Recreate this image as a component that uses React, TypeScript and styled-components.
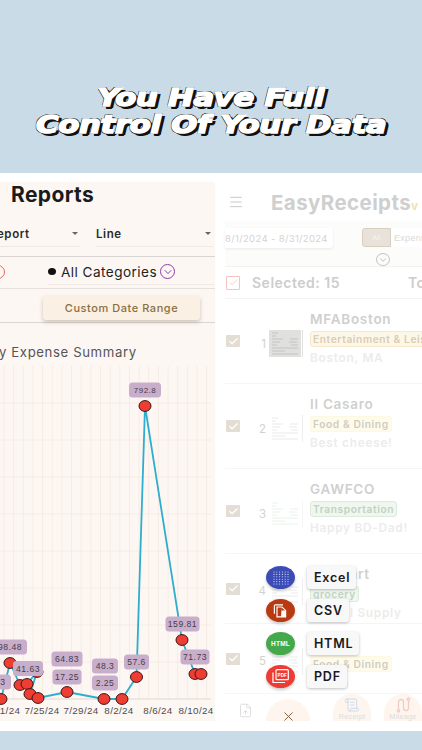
import { createGlobalStyle } from "styled-components";
import styled from "styled-components";
import { Check, ChevronDown, FileUp, Menu, ScrollText, Trash2, X } from "lucide-react";

const rows = [
  { n: 1, title: "MFABoston", tag: "Entertainment & Leisure", tone: "orange", note: "Boston, MA", h: 85, scan: "gray" },
  { n: 2, title: "Il Casaro", tag: "Food & Dining", tone: "yellow", note: "Best cheese!", h: 85, scan: "paper" },
  { n: 3, title: "GAWFCO", tag: "Transportation", tone: "green", note: "Happy BD-Dad!", h: 85, scan: "mint" },
  { n: 4, title: "Walmart", tag: "grocery", tone: "green", note: "School Supply", h: 70, scan: "paper" },
  { n: 5, title: "Apple", tag: "Food & Dining", tone: "yellow", note: "Lunch", h: 70, scan: "paper" },
];

const tones: Record<string, { bg: string; line: string; text: string }> = {
  orange: { bg: "#fdf7e8", line: "#f6e9cb", text: "#d9cdb4" },
  yellow: { bg: "#fefbea", line: "#fdf8e2", text: "#cfcdc4" },
  green: { bg: "#eff7ef", line: "#dcecdc", text: "#c3d2c3" },
};

const scans: Record<string, { bg: string; ink: string; edge: string }> = {
  gray: { bg: "#e0e0de", ink: "#c4c4c2", edge: "#e0e0de" },
  paper: { bg: "#ffffff", ink: "#eaeaea", edge: "#eeeeee" },
  mint: { bg: "#ffffff", ink: "#e6f2ea", edge: "#f6f6f6" },
};

const scanLines = [
  [3, 3, 9], [3, 6, 7], [3, 9, 14], [21, 9, 29], [3, 12, 11], [20, 12, 28],
  [3, 15, 8], [22, 15, 29], [3, 18, 29], [3, 21, 16], [3, 24, 29],
];

const points = [
  [1, 700], [10, 664], [20, 686], [27, 685], [37, 673], [30, 695], [38, 699],
  [67, 693], [104, 700], [122, 700], [136.5, 678], [145, 407], [182, 641],
  [195, 675], [201, 675],
];

const labels = [
  { x: 10, y: 648, w: 34, t: "98.48" },
  { x: 1, y: 683, w: 20, t: "3", tx: 3 },
  { x: 28, y: 669.5, w: 30, t: "41.63" },
  { x: 67, y: 660, w: 31, t: "64.83" },
  { x: 67, y: 678, w: 29, t: "17.25" },
  { x: 105, y: 667, w: 26, t: "48.3" },
  { x: 105, y: 684, w: 26, t: "2.25" },
  { x: 136.5, y: 663, w: 25, t: "57.6" },
  { x: 145, y: 391, w: 32, t: "792.8", small: true },
  { x: 182.5, y: 625, w: 34, t: "159.81" },
  { x: 195, y: 658, w: 29, t: "71.73" },
];

const ticks = [
  { x: 10, t: "1/24" },
  { x: 42, t: "7/25/24" },
  { x: 81, t: "7/29/24" },
  { x: 119, t: "8/2/24" },
  { x: 158, t: "8/6/24" },
  { x: 196, t: "8/10/24" },
];

const CHART_TOP = 367;

function ExpenseChart() {
  const vertical = Array.from({ length: 22 }, (_, i) => 4 + i * 9.65);
  const horizontal = Array.from({ length: 9 }, (_, i) => 404 + i * 37);
  return (
    <ChartSvg viewBox={`0 ${CHART_TOP} 215 355`}>
      {vertical.map((x) => (
        <line key={x} x1={x} x2={x} y1={CHART_TOP} y2={700} stroke="#f7ebe3" strokeWidth="1" />
      ))}
      {horizontal.map((y) => (
        <line key={y} x1={0} x2={211} y1={y} y2={y} stroke="#f7ebe3" strokeWidth="1" />
      ))}
      <line x1={0} x2={211} y1={700} y2={700} stroke="#e4dcd6" strokeWidth="1" />
      <polyline
        points={points.map((p) => p.join(",")).join(" ")}
        fill="none"
        stroke="#2fadcf"
        strokeWidth="1.8"
      />
      {points.map(([x, y]) => (
        <ellipse key={`${x}-${y}`} cx={x} cy={y} rx="6" ry="5.4" fill="#ee3d33" stroke="#421515" strokeWidth="1" />
      ))}
      {labels.map((l) => (
        <g key={l.t}>
          <rect x={l.x - l.w / 2} y={l.y - 7.5} width={l.w} height="15" rx="3.5" fill="#c9aecb" />
          <text
            x={l.tx ?? l.x}
            y={l.y + 3}
            textAnchor="middle"
            fontSize={l.small ? 8 : 8.6}
            letterSpacing="0.5"
            fontFamily="'Liberation Sans', sans-serif"
            fill="#43404a"
          >
            {l.t}
          </text>
        </g>
      ))}
      {ticks.map((t) => (
        <text
          key={t.t}
          x={t.x}
          y={714.5}
          textAnchor="middle"
          fontSize="9.8"
          letterSpacing="0.35"
          fontFamily="'Liberation Sans', sans-serif"
          fill="#4d4d4d"
        >
          {t.t}
        </text>
      ))}
    </ChartSvg>
  );
}

function ReceiptScan({ kind }: { kind: string }) {
  const s = scans[kind];
  return (
    <ScanSvg viewBox="0 0 34 27">
      <rect x="0" y="0" width="32" height="27" fill={s.bg} />
      {scanLines.map(([x1, y, x2]) => (
        <line key={`${x1}-${y}`} x1={x1} x2={x2} y1={y} y2={y} stroke={s.ink} strokeWidth="1" />
      ))}
      <line x1="33.5" x2="33.5" y1="0" y2="27" stroke={s.edge} strokeWidth="1" />
    </ScanSvg>
  );
}

function ExcelIcon() {
  const dots = [];
  for (let x = 0; x < 6; x++) {
    for (let y = 0; y < 6; y++) {
      dots.push(<circle key={`${x}${y}`} cx={3 + x * 2.8} cy={3 + y * 2.4} r="0.55" fill="#dfe3ff" />);
    }
  }
  return (
    <svg width="20" height="18" viewBox="0 0 20 18">
      {dots}
    </svg>
  );
}

function CsvIcon() {
  return (
    <svg width="15" height="14" viewBox="0 0 15 14" fill="none">
      <path d="M10 .8H2.4a1 1 0 0 0-1 1v8" stroke="#fff" strokeWidth="1.2" />
      <path d="M4 3h5l3.6 3.4v6.4H4z" stroke="#fff" strokeWidth="1.2" />
      <path d="M8.8 3v3.6h3.8v6.2H8z" fill="#fff" />
    </svg>
  );
}

function PdfIcon() {
  return (
    <svg width="17" height="15" viewBox="0 0 17 15" fill="none">
      <rect x="4" y="0.7" width="12.3" height="10" rx="1" stroke="#fff" strokeWidth="1.2" />
      <path d="M1 3.5v10h12" stroke="#fff" strokeWidth="1.2" />
      <text x="10.2" y="7.6" textAnchor="middle" fontSize="4.6" fontWeight="700" fontFamily="'Liberation Sans', sans-serif" fill="#fff">
        PDF
      </text>
    </svg>
  );
}

function HtmlIcon() {
  return <HtmlMark>HTML</HtmlMark>;
}

function MileageIcon() {
  return (
    <svg width="15" height="16" viewBox="0 0 15 16" fill="none" stroke="#f0cdc4" strokeWidth="1.3" strokeLinecap="round">
      <circle cx="2.5" cy="13.8" r="1.2" />
      <circle cx="12.5" cy="2.2" r="1.2" />
      <path d="M2.5 12.6V5a2.5 2.5 0 0 1 5 0v6a2.5 2.5 0 0 0 5 0V3.4" />
    </svg>
  );
}

const exportsList = [
  { label: "Excel", color: "#3b4cb6", Icon: ExcelIcon },
  { label: "CSV", color: "#b93a10", Icon: CsvIcon },
  { label: "HTML", color: "#44a94a", Icon: HtmlIcon },
  { label: "PDF", color: "#ec3c33", Icon: PdfIcon },
];

export default function App() {
  return (
    <>
      <GlobalStyle />
      <Page>
        <Hero>
          <Headline>You Have Full</Headline>
          <Headline>Control Of Your Data</Headline>
        </Hero>
        <Panels>
          <ReportsPane>
            <PaneTitle>Reports</PaneTitle>
            <SelectRow>
              <SelectField $width={91}>
                <span>Report</span>
                <Caret />
              </SelectField>
              <SelectField $width={117}>
                <span>Line</span>
                <Caret />
              </SelectField>
            </SelectRow>
            <FilterRow>
              <RedCircle />
              <CategoryField>
                <Bullet />
                <span>All Categories</span>
                <PurpleChevron>
                  <ChevronDown size={12} strokeWidth={2} />
                </PurpleChevron>
              </CategoryField>
            </FilterRow>
            <RangeRow>
              <CustomRange>Custom Date Range</CustomRange>
            </RangeRow>
            <ChartTitle>y Expense Summary</ChartTitle>
            <ExpenseChart />
          </ReportsPane>

          <ReceiptsPane>
            <AppBar>
              <Menu size={16} color="#c9c9c9" strokeWidth={1.5} />
              <AppName>
                EasyReceipts<AppMark>v</AppMark>
              </AppName>
            </AppBar>
            <FilterBand>
              <BandRow>
                <DatePill>8/1/2024 - 8/31/2024</DatePill>
                <Segment>
                  <SegmentAll>All</SegmentAll>
                  <SegmentOther>Expense</SegmentOther>
                </Segment>
              </BandRow>
              <ExpandButton>
                <ChevronDown size={10} />
              </ExpandButton>
            </FilterBand>
            <SelectedBar>
              <OutlineCheck>
                <Check size={11} strokeWidth={1.6} />
              </OutlineCheck>
              <SelectedText>Selected: 15</SelectedText>
              <Trash2 size={13} color="#f3c9c5" strokeWidth={1.4} />
              <TotalText>Total</TotalText>
            </SelectedBar>
            {rows.map((r) => (
              <ReceiptRow key={r.n} $height={r.h}>
                <RowCheck>
                  <Check size={11} color="#fff" strokeWidth={2.6} />
                </RowCheck>
                <RowNumber>{r.n}</RowNumber>
                <ReceiptScan kind={r.scan} />
                <RowInfo>
                  <RowTitle>{r.title}</RowTitle>
                  <Tag $tone={r.tone}>{r.tag}</Tag>
                  <RowNote>{r.note}</RowNote>
                </RowInfo>
              </ReceiptRow>
            ))}

            <ExportMenu>
              {exportsList.map((item) => (
                <ExportItem key={item.label}>
                  <ExportFab $color={item.color}>
                    <item.Icon />
                  </ExportFab>
                  <ExportLabel>{item.label}</ExportLabel>
                </ExportItem>
              ))}
            </ExportMenu>

            <BottomBar>
              <UploadSlot>
                <FileUp size={15} color="#d8d8d8" strokeWidth={1.3} />
              </UploadSlot>
              <CloseFab>
                <X size={15} color="#7a5a35" strokeWidth={1.5} />
              </CloseFab>
              <ActionFab>
                <ScrollText size={16} color="#c6d8ee" strokeWidth={1.3} />
                <span>Receipt</span>
              </ActionFab>
              <ActionFab>
                <MileageIcon />
                <span>Mileage</span>
              </ActionFab>
            </BottomBar>
          </ReceiptsPane>
        </Panels>
      </Page>
    </>
  );
}

/*Styled Components*/

const GlobalStyle = createGlobalStyle`
  html, body {
    margin: 0;
    padding: 0;
    background: #cadbe8;
  }
  * {
    box-sizing: border-box;
  }
`;

const Page = styled.div`
  width: 422px;
  height: 750px;
  overflow: hidden;
  background: #cadbe8;
  font-family: "Liberation Sans", Arial, sans-serif;
`;

const Hero = styled.div`
  height: 173px;
  padding-top: 84px;
  display: flex;
  flex-direction: column;
  align-items: center;
`;

const Headline = styled.div`
  font-family: "DejaVu Sans", sans-serif;
  font-weight: 700;
  font-style: italic;
  font-size: 24.5px;
  line-height: 27px;
  letter-spacing: -0.2px;
  white-space: nowrap;
  color: #fff;
  transform: scaleX(1.25);
  -webkit-text-stroke: 1.6px #fff;
  text-shadow: -1px -1px 0 #111, 1px -1px 0 #111, -1px 1px 0 #111, 2px 2px 0 #111, 3px 2px 0 #111, 2px 3px 0 #111;
`;

const Panels = styled.div`
  display: flex;
  height: 558px;
  padding: 9px 0 10px;
  background: #fff;
`;

const ReportsPane = styled.div`
  width: 215px;
  background: #fdf7f4;
  overflow: hidden;
  display: flex;
  flex-direction: column;
`;

const PaneTitle = styled.div`
  height: 35px;
  padding-left: 11px;
  font-family: Inter, sans-serif;
  font-size: 21px;
  line-height: 26px;
  font-weight: 700;
  letter-spacing: 0.4px;
  color: #1b1b1b;
`;

const SelectRow = styled.div`
  height: 40px;
  padding-top: 5px;
  margin-left: -11px;
  display: flex;
  gap: 16px;
  border-bottom: 1px solid #d9d5d2;
`;

const SelectField = styled.div<{ $width: number }>`
  width: ${(p) => p.$width}px;
  flex: none;
  height: 25px;
  padding-right: 2px;
  display: flex;
  align-items: center;
  justify-content: space-between;
  font-family: Inter, sans-serif;
  font-size: 11.5px;
  font-weight: 600;
  letter-spacing: 0.6px;
  color: #2b2b2b;
  border-bottom: 1px solid #f0e9e5;
`;

const Caret = styled.i`
  width: 0;
  height: 0;
  border-left: 3.5px solid transparent;
  border-right: 3.5px solid transparent;
  border-top: 3.5px solid #666;
`;

const FilterRow = styled.div`
  height: 32px;
  display: flex;
  align-items: center;
  margin-left: -9px;
`;

const RedCircle = styled.i`
  width: 14px;
  height: 14px;
  flex: none;
  border-radius: 50%;
  border: 1.4px solid #e8655c;
`;

const CategoryField = styled.div`
  width: 166px;
  height: 26px;
  margin-left: 43px;
  display: flex;
  align-items: center;
  border-bottom: 1px solid #f0e9e5;
  font-family: Inter, sans-serif;
  font-size: 13.6px;
  letter-spacing: 0.45px;
  color: #222;
`;

const Bullet = styled.i`
  width: 8px;
  height: 7px;
  margin-right: 5px;
  border-radius: 50%;
  background: #111;
`;

const PurpleChevron = styled.i`
  width: 15px;
  height: 15px;
  margin-left: 3px;
  border-radius: 50%;
  border: 1.3px solid #8a3fa8;
  color: #8a3fa8;
  display: flex;
  align-items: center;
  justify-content: center;
`;

const RangeRow = styled.div`
  height: 35px;
  padding: 7px 0 0 43px;
  border-top: 1px solid #e5e0dc;
  border-bottom: 1px solid #d9d5d2;
`;

const CustomRange = styled.div`
  width: 157px;
  height: 24px;
  display: flex;
  align-items: center;
  justify-content: center;
  border-radius: 3px;
  background: #faf0e4;
  box-shadow: 0 2px 4px rgba(90, 70, 40, 0.3);
  font-family: Inter, sans-serif;
  font-size: 11px;
  font-weight: 500;
  letter-spacing: 0.55px;
  color: #8a6f3e;
`;

const ChartTitle = styled.div`
  height: 44px;
  padding-top: 21px;
  margin-left: -1px;
  font-family: Inter, sans-serif;
  font-size: 13.2px;
  line-height: 16px;
  letter-spacing: 0.6px;
  color: #555;
  white-space: nowrap;
`;

const ChartSvg = styled.svg`
  display: block;
  width: 215px;
  height: 355px;
  flex: none;
  margin-top: -1px;
`;

const ReceiptsPane = styled.div`
  position: relative;
  flex: 1;
  min-width: 0;
  padding-left: 10px;
  overflow: hidden;
`;

const AppBar = styled.div`
  height: 39px;
  display: flex;
  align-items: center;
  padding-left: 3px;
`;

const AppName = styled.div`
  margin-left: 27px;
  padding-top: 1px;
  font-family: Inter, sans-serif;
  font-size: 20.5px;
  font-weight: 700;
  letter-spacing: 0.4px;
  color: #cfcfcf;
  white-space: nowrap;
`;

const AppMark = styled.span`
  color: #f4e2ae;
  font-size: 12px;
`;

const FilterBand = styled.div`
  height: 46px;
  background: #fcfcfb;
  border-bottom: 1px solid #f2f2f2;
  display: flex;
  flex-direction: column;
`;

const BandRow = styled.div`
  display: flex;
  padding-top: 7px;
  white-space: nowrap;
`;

const DatePill = styled.div`
  width: 108px;
  height: 20px;
  flex: none;
  display: flex;
  align-items: center;
  border-radius: 0 3px 3px 0;
  background: #fff;
  box-shadow: 0 1px 3px rgba(0, 0, 0, 0.08);
  font-family: Inter, sans-serif;
  font-size: 9.6px;
  letter-spacing: 0.3px;
  color: #d4d4d4;
`;

const Segment = styled.div`
  display: flex;
  margin-left: 29px;
  height: 19px;
`;

const SegmentAll = styled.div`
  width: 29px;
  display: flex;
  align-items: center;
  justify-content: center;
  border: 1px solid #d9cfc0;
  border-radius: 3px 0 0 3px;
  background: #e9e2da;
  font-size: 7px;
  color: #f7f4f0;
`;

const SegmentOther = styled.div`
  width: 60px;
  padding-left: 3px;
  display: flex;
  align-items: center;
  background: #fff;
  font-size: 9px;
  letter-spacing: 0.3px;
  color: #d8d8d8;
`;

const ExpandButton = styled.div`
  width: 14px;
  height: 13px;
  margin: 5px 0 0 151px;
  border-radius: 50%;
  border: 1px solid #c4c4c4;
  color: #b4b4b4;
  display: flex;
  align-items: center;
  justify-content: center;
`;

const SelectedBar = styled.div`
  height: 32px;
  padding-left: 1px;
  display: flex;
  align-items: center;
  white-space: nowrap;
  border-bottom: 1px solid #f3f3f3;
`;

const OutlineCheck = styled.div`
  width: 14px;
  height: 14px;
  flex: none;
  border: 1px solid #f3c4bf;
  border-radius: 1px;
  color: #f3c4bf;
  display: flex;
  align-items: center;
  justify-content: center;
`;

const SelectedText = styled.div`
  width: 103px;
  flex: none;
  margin-left: 12px;
  font-family: Inter, sans-serif;
  font-size: 14px;
  font-weight: 600;
  letter-spacing: 0.5px;
  color: #cdcdcd;
`;

const TotalText = styled.div`
  margin-left: 53px;
  flex: none;
  font-family: Inter, sans-serif;
  font-size: 14px;
  font-weight: 600;
  letter-spacing: 0.4px;
  color: #cdcdcd;
`;

const ReceiptRow = styled.div<{ $height: number }>`
  height: ${(p) => p.$height}px;
  padding-left: 1px;
  display: flex;
  align-items: center;
  white-space: nowrap;
  border-bottom: 1px solid #f5f5f5;
`;

const RowCheck = styled.div`
  width: 14px;
  height: 12px;
  flex: none;
  border-radius: 1px;
  background: #e3ddd3;
  display: flex;
  align-items: center;
  justify-content: center;
`;

const RowNumber = styled.div`
  width: 26px;
  flex: none;
  padding-top: 5px;
  text-align: right;
  font-family: Inter, sans-serif;
  font-size: 11.5px;
  color: #d2d2d2;
`;

const ScanSvg = styled.svg`
  width: 34px;
  height: 27px;
  flex: none;
  margin: 5px 0 0 3px;
`;

const RowInfo = styled.div`
  align-self: flex-start;
  margin-left: 7px;
  padding-top: 12px;
  display: flex;
  flex-direction: column;
  align-items: flex-start;
  gap: 3px;
`;

const RowTitle = styled.div`
  margin-bottom: 1px;
  font-family: Inter, sans-serif;
  font-size: 13.5px;
  line-height: 16px;
  font-weight: 600;
  letter-spacing: 0.75px;
  color: #cfcfcf;
`;

const Tag = styled.div<{ $tone: string }>`
  height: 16px;
  padding: 0 2px;
  display: flex;
  align-items: center;
  border: 1px solid ${(p) => tones[p.$tone].line};
  border-radius: 3px;
  background: ${(p) => tones[p.$tone].bg};
  color: ${(p) => tones[p.$tone].text};
  font-family: Inter, sans-serif;
  font-size: 10.2px;
  font-weight: 600;
  letter-spacing: 0.6px;
`;

const RowNote = styled.div`
  font-family: Inter, sans-serif;
  font-size: 11.8px;
  line-height: 16px;
  font-weight: 600;
  letter-spacing: 0.75px;
  color: #ececec;
`;

const ExportMenu = styled.div`
  position: absolute;
  left: 51px;
  top: 384px;
  display: flex;
  flex-direction: column;
  gap: 10px;
`;

const ExportItem = styled.div`
  height: 23px;
  display: flex;
  align-items: center;
`;

const ExportFab = styled.div<{ $color: string }>`
  width: 29px;
  height: 23px;
  flex: none;
  border-radius: 50%;
  background: ${(p) => p.$color};
  box-shadow: 0 2px 3px rgba(0, 0, 0, 0.2);
  display: flex;
  align-items: center;
  justify-content: center;
`;

const HtmlMark = styled.span`
  font-size: 6.5px;
  font-weight: 700;
  letter-spacing: 0.2px;
  color: #fff;
`;

const ExportLabel = styled.div`
  height: 23px;
  margin-left: 12px;
  padding: 0 6px 0 7px;
  display: flex;
  align-items: center;
  border-radius: 3px;
  background: #f8f8f8;
  box-shadow: 0 1px 3px rgba(0, 0, 0, 0.25);
  font-family: Inter, sans-serif;
  font-size: 12.5px;
  font-weight: 600;
  letter-spacing: 0.8px;
  color: #1a1a1a;
`;

const BottomBar = styled.div`
  position: absolute;
  left: 0;
  right: 0;
  bottom: 0;
  height: 28px;
  display: flex;
  align-items: flex-end;
  overflow: hidden;
  background: linear-gradient(rgba(255, 255, 255, 0), #fff 40%);
`;

const UploadSlot = styled.div`
  width: 51px;
  height: 28px;
  padding: 10px 0 0 23px;
  flex: none;
`;

const CloseFab = styled.div`
  width: 44px;
  height: 22px;
  flex: none;
  padding-top: 10px;
  border-radius: 22px 22px 0 0;
  background: #fdf5ee;
  display: flex;
  justify-content: center;
`;

const ActionFab = styled.div`
  width: 38px;
  height: 27px;
  flex: none;
  margin-left: 23px;
  border-radius: 19px 19px 0 0;
  background: #fdf5ee;
  display: flex;
  flex-direction: column;
  align-items: center;
  padding-top: 3px;
  font-size: 7.2px;
  line-height: 8px;
  letter-spacing: 0.3px;
  color: #dcdcdc;

  & + & {
    margin-left: 13px;
  }
`;
